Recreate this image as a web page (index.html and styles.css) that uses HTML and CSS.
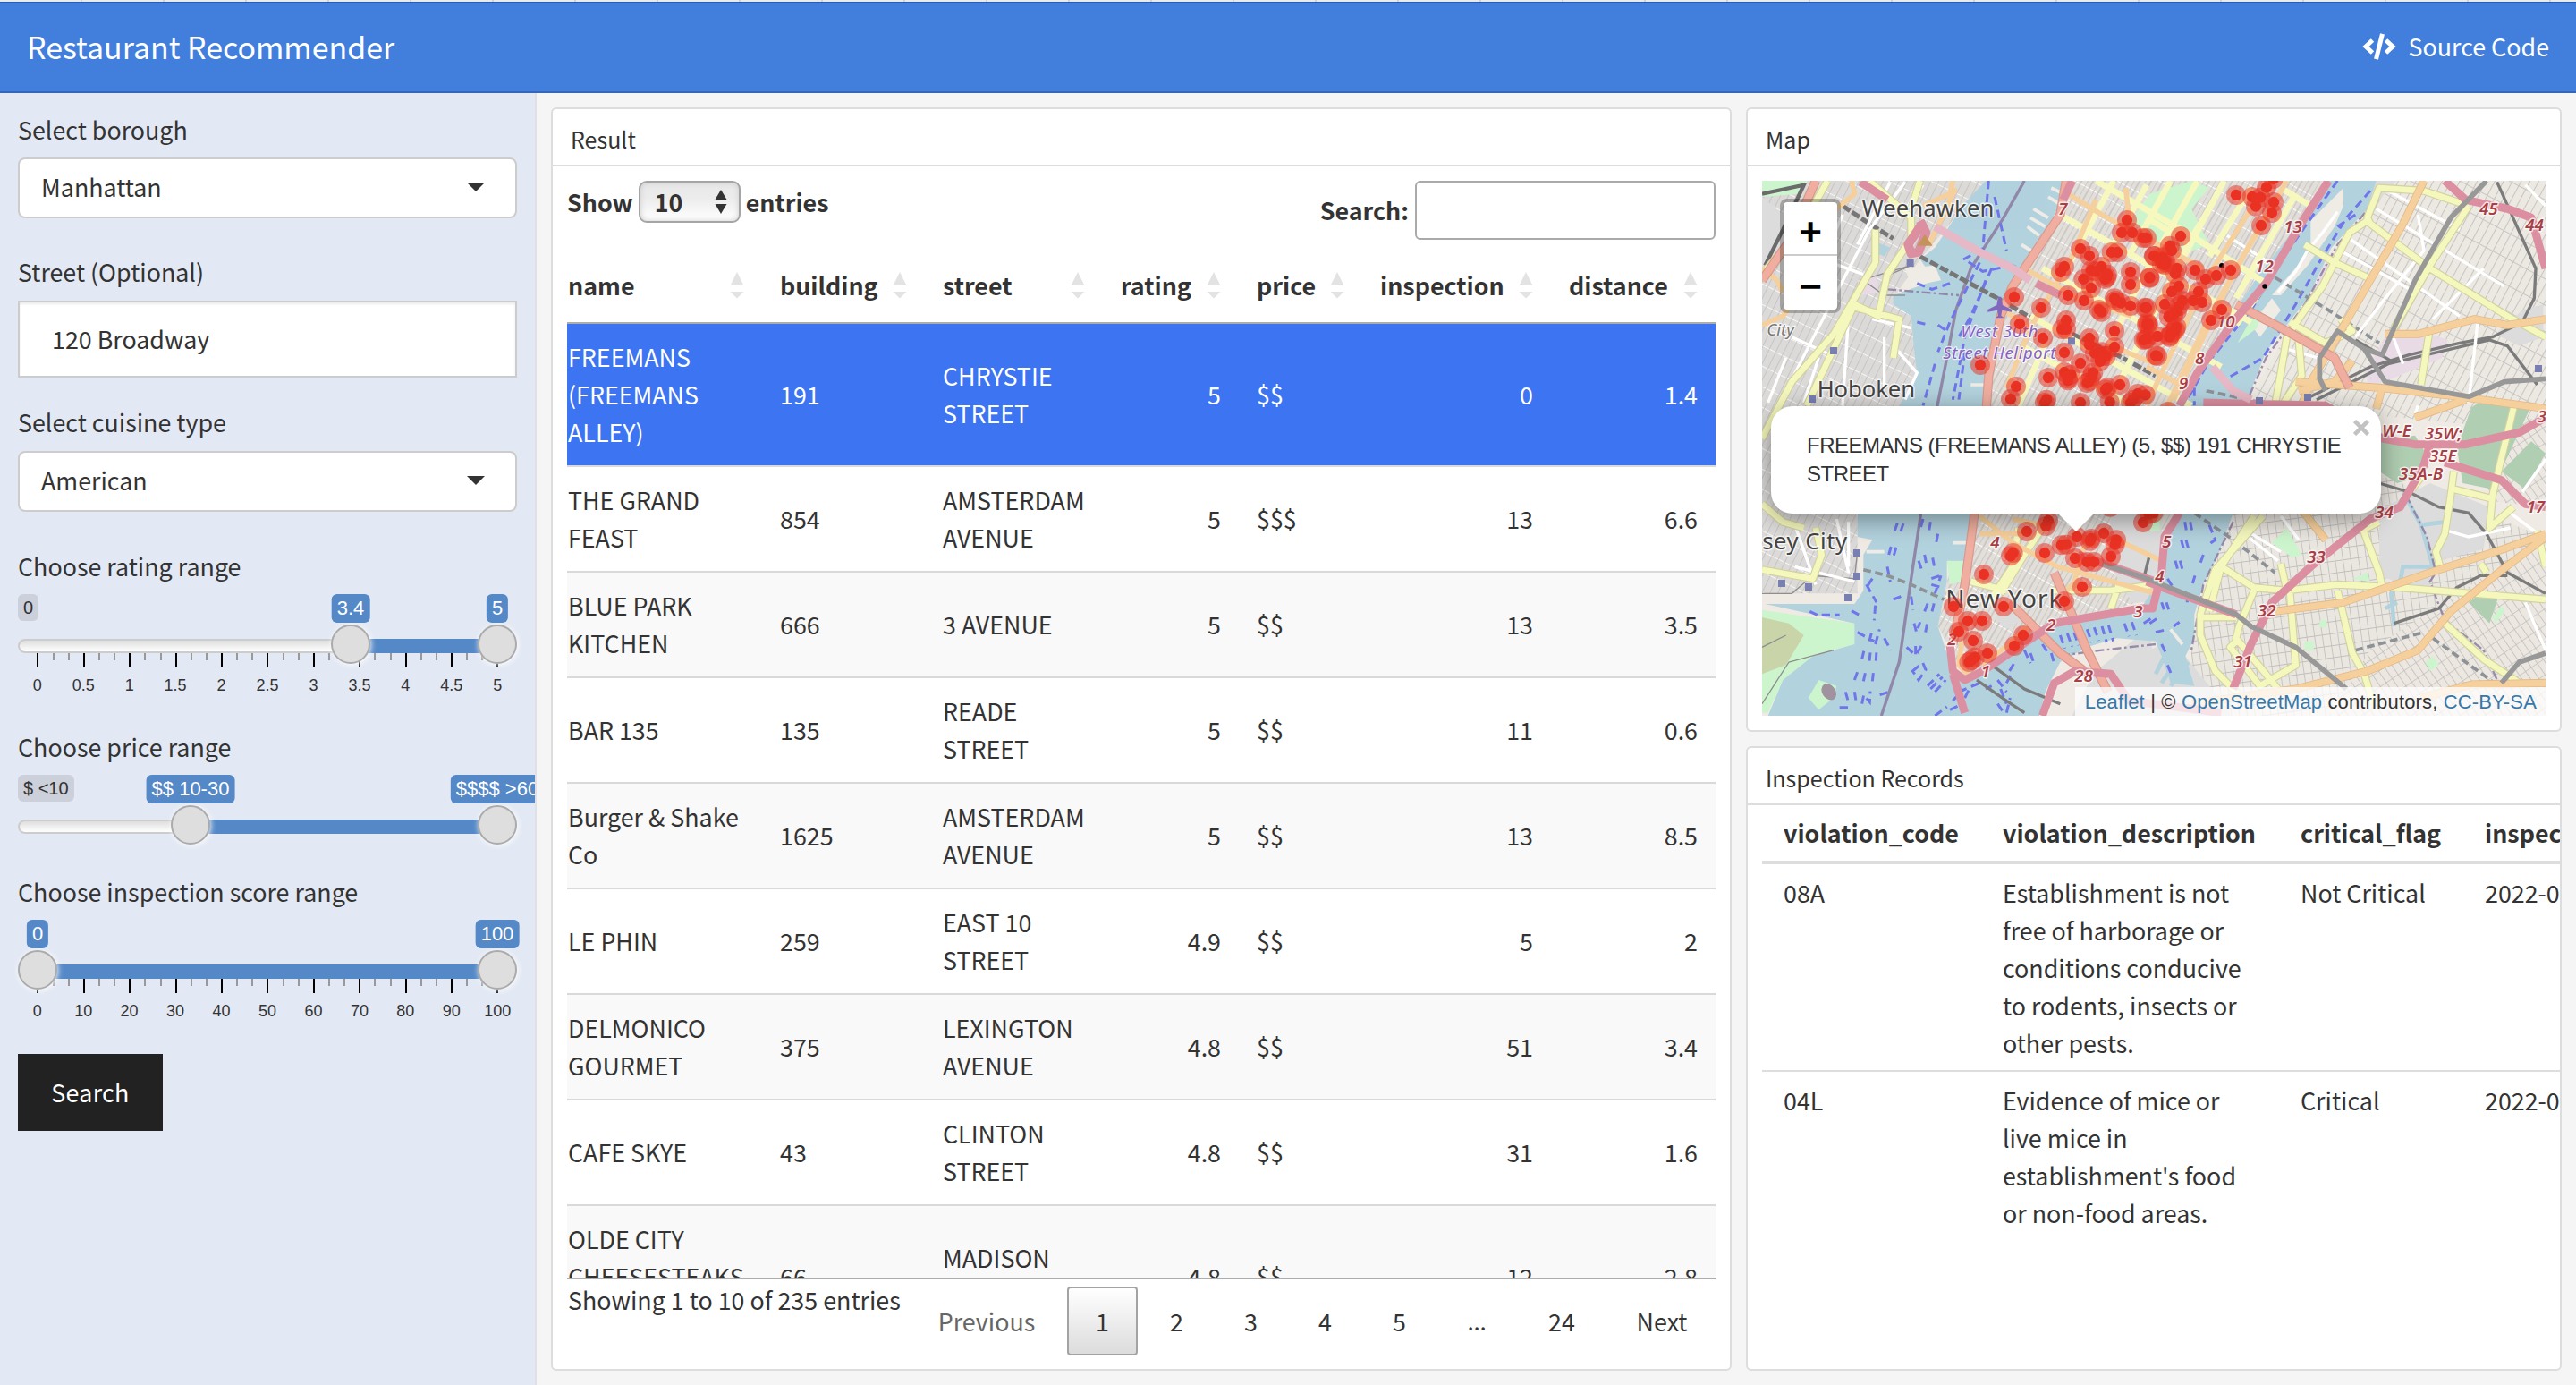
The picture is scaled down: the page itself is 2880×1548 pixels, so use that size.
FILE: index.html
```html
<!DOCTYPE html>
<html lang="en">
<head>
<meta charset="utf-8">
<title>Restaurant Recommender</title>
<link rel="stylesheet" href="styles.css">
</head>
<body>
<div class="tabstrip"></div>
<header class="topbar">
  <h1 class="brand">Restaurant Recommender</h1>
  <a class="source">
    <svg class="code-icon" viewBox="0 0 38 30"><g fill="none" stroke="#fff" stroke-width="5"><path d="M11.500 8 4 15l7.500 7M26.500 8 34 15l-7.500 7"/><path d="M22.500.8 15.500 29.200"/></g></svg>
    <span>Source Code</span>
  </a>
</header>
<div class="layout">
  <aside class="sidebar">
    <div class="field">
      <label>Select borough</label>
      <div class="select"><span>Manhattan</span><i class="caret"></i></div>
    </div>
    <div class="field field-street">
      <label>Street (Optional)</label>
      <div class="textbox">120 Broadway</div>
    </div>
    <div class="field field-cuisine">
      <label>Select cuisine type</label>
      <div class="select"><span>American</span><i class="caret"></i></div>
    </div>
    <div class="field field-rating">
      <label>Choose rating range</label>
      <div class="slider slider-grid">
        <span class="min">0</span>
        <div class="track"></div>
        <div class="bar" style="left:372px;width:164px"></div>
        <svg class="ticks" viewBox="0 0 558 16"><path class="minor" d="M40 0v8M57 0v8M91 0v8M108 0v8M142 0v8M160 0v8M194 0v8M211 0v8M245 0v8M262 0v8M297 0v8M314 0v8M348 0v8M365 0v8M399 0v8M417 0v8M451 0v8M468 0v8M502 0v8M519 0v8"/><path class="major" d="M22 0v16M74 0v16M125 0v16M177 0v16M228 0v16M279 0v16M331 0v16M382 0v16M434 0v16M485 0v16M536 0v16"/></svg>
        <div class="scale"><span>0</span><span>0.5</span><span>1</span><span>1.5</span><span>2</span><span>2.5</span><span>3</span><span>3.5</span><span>4</span><span>4.5</span><span>5</span></div>
        <b class="handle" style="left:350px"></b><b class="handle" style="left:514px"></b>
        <span class="val" style="left:372px">3.4</span><span class="val" style="left:536px">5</span>
      </div>
    </div>
    <div class="field field-price">
      <label>Choose price range</label>
      <div class="slider">
        <span class="min">$ &lt;10</span>
        <div class="track"></div>
        <div class="bar" style="left:193px;width:343px"></div>
        <b class="handle" style="left:171px"></b><b class="handle" style="left:514px"></b>
        <span class="val" style="left:193px">$$ 10-30</span><span class="val" style="left:536px">$$$$ &gt;60</span>
      </div>
    </div>
    <div class="field field-score">
      <label>Choose inspection score range</label>
      <div class="slider slider-grid">
        <div class="track"></div>
        <div class="bar" style="left:22px;width:514px"></div>
        <svg class="ticks" viewBox="0 0 558 16"><path class="minor" d="M40 0v8M57 0v8M91 0v8M108 0v8M142 0v8M160 0v8M194 0v8M211 0v8M245 0v8M262 0v8M297 0v8M314 0v8M348 0v8M365 0v8M399 0v8M417 0v8M451 0v8M468 0v8M502 0v8M519 0v8"/><path class="major" d="M22 0v16M74 0v16M125 0v16M177 0v16M228 0v16M279 0v16M331 0v16M382 0v16M434 0v16M485 0v16M536 0v16"/></svg>
        <div class="scale"><span>0</span><span>10</span><span>20</span><span>30</span><span>40</span><span>50</span><span>60</span><span>70</span><span>80</span><span>90</span><span>100</span></div>
        <b class="handle" style="left:0px"></b><b class="handle" style="left:514px"></b>
        <span class="val" style="left:22px">0</span><span class="val" style="left:536px">100</span>
      </div>
    </div>
    <button class="go">Search</button>
  </aside>

  <main class="board">
    <section class="card result">
      <h2>Result</h2>
      <div class="result-body">
        <div class="tools">
          <div class="length">Show <span class="count">10<svg viewBox="0 0 14 28"><path d="M7 0l6.500 11H.5zM.5 16h13L7 27z" fill="#333"/></svg></span> entries</div>
          <div class="filter">Search: <span class="filter-box"></span></div>
        </div>
        <div class="scroller">
          <table class="grid">
            <colgroup><col class="c1"><col class="c2"><col class="c3"><col class="c4"><col class="c5"><col class="c6"><col class="c7"></colgroup>
            <thead><tr><th>name</th><th>building</th><th>street</th><th>rating</th><th>price</th><th>inspection</th><th>distance</th></tr></thead>
            <tbody>
              <tr class="picked"><td>FREEMANS<br>(FREEMANS<br>ALLEY)</td><td>191</td><td>CHRYSTIE<br>STREET</td><td class="n">5</td><td>$$</td><td class="n">0</td><td class="n">1.4</td></tr>
              <tr><td>THE GRAND<br>FEAST</td><td>854</td><td>AMSTERDAM<br>AVENUE</td><td class="n">5</td><td>$$$</td><td class="n">13</td><td class="n">6.6</td></tr>
              <tr><td>BLUE PARK<br>KITCHEN</td><td>666</td><td>3 AVENUE</td><td class="n">5</td><td>$$</td><td class="n">13</td><td class="n">3.5</td></tr>
              <tr><td>BAR 135</td><td>135</td><td>READE<br>STREET</td><td class="n">5</td><td>$$</td><td class="n">11</td><td class="n">0.6</td></tr>
              <tr><td>Burger &amp; Shake<br>Co</td><td>1625</td><td>AMSTERDAM<br>AVENUE</td><td class="n">5</td><td>$$</td><td class="n">13</td><td class="n">8.5</td></tr>
              <tr><td>LE PHIN</td><td>259</td><td>EAST 10<br>STREET</td><td class="n">4.9</td><td>$$</td><td class="n">5</td><td class="n">2</td></tr>
              <tr><td>DELMONICO<br>GOURMET</td><td>375</td><td>LEXINGTON<br>AVENUE</td><td class="n">4.8</td><td>$$</td><td class="n">51</td><td class="n">3.4</td></tr>
              <tr><td>CAFE SKYE</td><td>43</td><td>CLINTON<br>STREET</td><td class="n">4.8</td><td>$$</td><td class="n">31</td><td class="n">1.6</td></tr>
              <tr><td>OLDE CITY<br>CHEESESTEAKS<br>&nbsp;</td><td>66</td><td>MADISON<br>&nbsp;</td><td class="n">4.8</td><td>$$</td><td class="n">12</td><td class="n">2.8</td></tr>
            </tbody>
          </table>
        </div>
        <div class="foot">
          <div class="info">Showing 1 to 10 of 235 entries</div>
          <nav class="pager"><a class="prev">Previous</a><a class="on">1</a><a>2</a><a>3</a><a>4</a><a>5</a><span>…</span><a class="last">24</a><a class="next">Next</a></nav>
        </div>
      </div>
    </section>

    <div class="side">
      <section class="card mapcard">
        <h2>Map</h2>
        <div class="map">
          <svg class="tiles" viewBox="60 306 2628 1794" preserveAspectRatio="none">
            <defs>
              <pattern id="blkM" width="34" height="68" patternUnits="userSpaceOnUse" patternTransform="rotate(29)"><rect width="34" height="68" fill="#e2deda"/><path d="M0 0H34" stroke="#fff" stroke-width="6"/><path d="M0 0V68M17 0V68" stroke="#c3c1bd" stroke-width="4"/></pattern>
              <pattern id="blkQ" width="26" height="78" patternUnits="userSpaceOnUse" patternTransform="rotate(28)"><rect width="26" height="78" fill="#ece8e2"/><path d="M0 0H26" stroke="#c2c0bd" stroke-width="5"/><path d="M0 0V78" stroke="#c6c4c1" stroke-width="6"/></pattern>
              <pattern id="blkB" width="26" height="40" patternUnits="userSpaceOnUse" patternTransform="rotate(-8)"><rect width="26" height="40" fill="#eae6e0"/><path d="M0 0H26M0 0V40" stroke="#c1bfbc" stroke-width="5"/></pattern>
              <pattern id="blkS" width="24" height="46" patternUnits="userSpaceOnUse" patternTransform="rotate(-34)"><rect width="24" height="46" fill="#ece8e1"/><path d="M0 0H24M0 0V46" stroke="#c1bfbc" stroke-width="5"/></pattern>
              <pattern id="blkJ" width="24" height="62" patternUnits="userSpaceOnUse" patternTransform="rotate(26)"><rect width="24" height="62" fill="#dcdad8"/><path d="M0 0H24" stroke="#f8f7f6" stroke-width="6"/><path d="M0 0V62" stroke="#bdbbb9" stroke-width="4"/></pattern>
              <marker id="dot" markerUnits="userSpaceOnUse" markerWidth="68" markerHeight="68" refX="34" refY="34"><circle cx="34" cy="34" r="33" fill="#e93223" fill-opacity=".52"/><circle cx="34" cy="34" r="18.500" fill="#e93223"/></marker>
            </defs>
            <rect x="60" y="306" width="2628" height="1794" fill="#efebe4"/>
            <path fill="url(#blkJ)" d="M60 306H810L590 570 500 700 560 760 580 960 380 1430V1690H60z"/>
            <path fill="url(#blkM)" d="M1080 306H1960L1650 800 1480 1060 1460 1420 1390 1700 1000 1810 740 1970 650 1800 800 1060 880 680z"/>
            <path fill="url(#blkQ)" d="M2120 306H2688V1150L2200 1100 1680 1060 1890 700z"/>
            <path fill="url(#blkB)" d="M1640 1420 2150 1300 2688 1500V1700L2300 2100H1500V1860L1590 1560z"/>
            <path fill="url(#blkS)" d="M2100 1880 2688 1500V2100H1960zM2460 1050 2688 1120V1400L2500 1380z"/>
            <path fill="#dcdcdc" d="M60 360 130 420 150 560 60 620zM2130 1410 2300 1320 2500 1400 2480 1540 2300 1590 2300 1690 2130 1630zM2610 740 2680 720V830L2600 860 2520 820zM1080 1790H1180V1850H1080zM840 1770 900 1730 930 1780 880 1810zM1230 1410H1400V1720H1300L1230 1600zM1350 1880 1440 1850 1560 2000 1640 2100H1340zM1170 1960 1360 1800 1390 2100H1100zM2080 306H2190L2130 370z"/>

            <!-- parks -->
            <g fill="#cdf5cd">
              <path d="M60 306H210L180 350 60 360zM1360 350 1500 306 1560 330 1500 400 1560 520 1450 560 1340 470 1290 450z"/>
              <path d="M60 1745 370 1790V1860L230 1900 130 1980 80 2090H60z"/>
              <path d="M1770 1520 1820 1470 1870 1560 1840 1570zM2040 1640 2090 1620 2100 1650zM1880 1850h30v30h-30zM2285 1920 2310 1900 2330 1930 2300 1950zM1660 850 1710 760 1720 830zM1930 1780h24v24h-24zM2510 1770 2540 1730 2550 1750 2520 1790zM1360 1420h34v60h-34zM680 1580H760V1640L690 1660z"/>
            </g>
            <path fill="#c9d5a9" d="M60 1770 150 1790 200 1830 140 1930 60 1960z"/>
            <g fill="#b0ceb2"><path d="M2440 1065 2500 1030 2640 1060 2510 1340 2410 1320 2390 1200zM2130 1180 2250 1160 2280 1210 2260 1300 2190 1320 2130 1280zM2540 1280 2640 1180 2688 1220 2620 1340 2580 1310zM2430 1720 2470 1690 2530 1700 2500 1790z"/></g>
            <g fill="#e8dbe6"><path d="M2080 950 2150 830 2270 810 2360 840 2340 900 2100 1000zM1900 720 1940 580 1970 600 1940 680zM380 640 440 620 450 680 390 690z"/></g>

            <!-- water -->
            <g fill="#b2d2de">
              <path d="M810 306 740 380 700 440 640 530 590 570 640 640 500 690 500 720 560 760 570 870 580 960 520 1060 400 1300 380 1430 380 1500 430 1510 400 1560V1680L370 1725 70 1725 370 1790V1860L230 1900 130 1980 80 2100H990L1010 2020 1060 1920 1150 1870 1250 1840 1380 1850 1400 1900 1430 1990 1510 2000 1480 1900 1510 1840 1510 1760 1540 1660 1590 1560 1640 1420 1680 1060 1750 880 1890 700 1970 530 2090 400 2120 306H1960L1820 500 1720 630 1650 740 1540 900 1480 1060 1460 1420 1420 1500 1390 1650 1330 1740 1040 1790 960 1830 800 1950 740 1970 700 1950 650 1800 680 1650V1580H740L770 1420 800 1060 850 740 880 680 940 580 1000 500 1060 380 1080 306z"/>
              <path d="M440 510 490 530 470 560 430 540z"/>
            </g>
            <path fill="#cdf5cd" d="M215 2040 250 1980 310 2000 300 2040 250 2080z"/>
            <g fill="none" stroke="#b2d2de" stroke-width="14"><path d="M2210 1350 2270 1460 2350 1450M2270 1460 2310 1600 2210 1600 2200 1650 2170 1690 2180 1800M2150 1740 2190 1720"/><path d="M1380 1960 1420 1880M1400 1990 1460 1900M1430 2000 1490 1920"/></g>
            <g fill="#efece6"><path d="M1770 690 1900 540 1900 440 1980 360 2010 330 2010 390 1980 460 1890 590 1800 690zM1700 790 1770 700 1800 740 1730 830zM540 600 640 590 660 640 560 660z"/><path fill="#cdf5cd" d="M1655 850 1700 770 1740 740 1720 800z"/></g>
            <path fill="none" stroke="#efece6" stroke-width="11" d="M1030 330 1070 350M1020 360 1060 385M970 400 1020 430M960 430 1010 460M950 460 990 490M930 520 970 545M410 1550h60M700 1520h50M760 990h50M1430 1810 1470 1860"/>

            <!-- state border and ferry lines -->
            <g fill="none" stroke="#8b7ba0" stroke-width="10" opacity=".85"><path d="M940 306 870 430 760 600 710 740 680 900 640 1100 590 1440 560 1640 520 1920 460 2100"/><path stroke-dasharray="30 10 8 10" stroke-width="7" d="M2120 370 1990 520 1880 720 1750 900 1680 1060M1640 1450 1540 1660 1500 1880M1380 1860 1200 1880 1050 1900M2220 1360 2290 1500 2320 1620 2300 1650 2350 1780 2480 1880 2530 1990M480 670 720 690"/></g>
            <g fill="none" stroke="#7076ea" stroke-width="9" stroke-dasharray="28 17">
              <path d="M820 306 800 540M840 360 880 540M735 570 790 540 900 590 800 610 740 570M790 580 690 780 650 880M830 600 760 760 720 830M810 640 740 830 700 1040M740 880 720 1040M640 920 600 1060M580 650 630 670 690 650M580 780 620 790M650 790 680 810"/>
              <path d="M505 1480l12-36M525 1482l12-36M485 1560l10-34M502 1562l10-34M600 1440l-10 36M625 1450l-6 34M650 1490l-8 40M605 1560l6 30M632 1570l6 30M585 1580l14 40M628 1640l34-12M628 1660l36 10M640 1690l20-60M480 1600l10 50M410 1660l34 60M430 1640l-20 30M440 1730l-4 50M500 1710l26-10M560 1700l6 46M605 1750l16-40M630 1750l10-40M570 1790l8 30 12-34M608 1820l8-40M470 1840l22 40M545 1870l30 28 0-40M580 1890l18-30M395 1910l8-34M420 1916l4-36M442 1916l2-36M370 1980l12-32M400 1984l8-36M430 1984l4-36M565 1950l34-28 10 24-24 34zM615 2000l40-40M625 2010l40-40M640 2020l36-40M340 2020l10 36M370 2020l6 36M395 2060l6-30 20 24 2-36M455 2030l30-10M320 2072h34M380 1820l56 30M420 1850l10-40M440 1860l14-50M220 1750l30 14M260 1762h60M360 1748l26 14M700 2050l34-40M740 2040l20-40M690 2080l50-24M640 2100l40-30M720 2020l70-30M810 2010l20-10M850 1980l30 40M860 2010l20 50M890 1950l14-24M880 1990l20-40M850 2060l20 30M880 2090l12-50M940 1880l20 44M960 1890l12 34M1000 1860l20 30M1030 1890l10 34M1060 1830l16 44M1084 1824l16 44M1106 1820l16 44M1150 1810l16 44M1174 1804l16 44M1200 1800l16 54M1222 1796l16 54M1275 1790l16 44M1300 1786l16 44M1340 1790l30-20"/>
              <path d="M1990 306 1810 560 1700 740 1560 910 1480 1050M2100 340 2020 430 1940 560 1850 720 1740 900 1600 980M2050 420 1990 460M1490 1000v60M1510 1000v60"/>
              <path d="M1478 1450l6 34M1496 1450l6 30M1466 1510l8 30M1482 1510l8 30M1446 1580l8 30M1462 1580l8 30M1420 1640l16 26M1400 1720l8 24M1416 1720l8 24M1560 1460l20 50-20 14M1540 1560l-12 34M1512 1630l-8 26M1486 1700v20M1360 1790l24-16M1380 1820l40-10M1440 1800l20-14M1400 1860l20 40M1420 1930l14 34"/>
            </g>

            <!-- railways -->
            <g fill="none" stroke="#8b8b8b" stroke-width="13"><path stroke="#6b6b6b" d="M60 350 200 320 130 470 70 590"/><path stroke="#777" stroke-width="15" stroke-dasharray="30 8" d="M590 560 720 630 850 700 970 770M1100 820 1250 890 1380 960M330 390 420 450 500 500"/><path stroke="#8d9297" stroke-width="11" stroke-dasharray="26 14" d="M400 1610 480 1630 560 1660 670 1710M1780 630 1960 740 2130 850M1510 1420 1640 1510 1780 1620M1550 1010 1780 1060M2050 1880 2280 1820M2310 1840 2530 2000"/>
              <path stroke="#7b7b7b" stroke-width="10" d="M1900 1030 2100 930 2230 890 2400 850 2510 830 2610 780 2650 700 2655 600 2525 310M1920 1040 2160 920 2500 840 2560 860 2660 990M2130 1320 2230 1350 2330 1400 2430 1420 2490 1490 2560 1620 2688 1690M2180 1790 2330 1740 2390 1670 2470 1630 2560 1630M2050 840 2170 910M830 1930 940 2010 1060 2060M780 1980 880 2050 940 2090M1340 1640 1360 1560"/></g>
            <g fill="none" stroke="#8e8e8e" stroke-width="4"><path d="M60 1690 160 1690 230 1630 370 1640 380 1550M300 1880 150 1920 60 2060M490 620 560 590 390 640 340 790 270 930 230 1040M140 1830 60 1870M540 690 470 690 400 640"/></g>

            <!-- minor white streets -->
            <g fill="none" stroke="#fff" stroke-width="10"><path d="M540 310 420 470 300 700 130 1030M490 310 380 520M330 420 270 560M600 320 520 430M180 540 400 620M160 830 290 890M250 900 200 1050M430 770 560 800M470 830V1000M350 760 330 1060M170 1460 240 1660M310 1440 350 1620M350 1450V1600M170 1600 370 1650M500 860 580 950 540 1040M140 900 80 1050"/><path d="M2260 420 2280 540 2150 700 2050 830M2120 400 2550 660M2030 500 2400 760M2000 540 2250 680M2160 340 2400 470M2480 600 2310 770M2460 780 2430 1050M2620 320 2688 390M2170 810 2210 920M1620 490 1760 580M1820 870 1960 910M2688 1240 2610 1350M2570 1420 2650 1480 2688 1540M2620 1720 2688 1880M2360 1480 2430 1500 2570 1470M2250 1090 2260 1060M1690 1500 1790 1580M1670 1470 1800 1550M1800 1430 1860 1510"/></g>
            <path fill="none" stroke="#fff" stroke-width="10" d="M1990 410 1940 480 1890 540 1850 610 1790 680"/>

            <!-- yellow roads -->
            <g fill="none" stroke="#d3d2a0" stroke-width="27" stroke-linejoin="round"><path id="y1" d="M280 306 180 480 60 620M420 306 560 430 560 500 480 620 450 760 370 720 210 1060M590 306 560 400M440 470 440 580 300 820 160 980 60 1170M370 730 520 770 500 900M240 1470 260 1560 230 1640 60 1610M60 1390 130 1450 200 1470M2688 830 2560 760 2300 600 2100 450 2090 430 2130 330 2280 340 2430 390M2430 390 2300 590 2180 800M1880 520 1980 580 2090 630M2090 440 2030 480 1980 580 1940 660 1880 740 1820 830 1800 950 1780 1060M1860 840 1870 960 1810 1050M1830 780 1950 850 2040 810 2000 770M2300 800 2270 990M2585 1050 2510 1360 2500 1470 2580 1400M2380 1280 2370 1360 2350 1490 2320 1550 2340 1620M2380 1340 2500 1370M2270 1300 2240 1340M2070 1460 2130 1620 2140 1670M2130 1450 2070 1480M1740 1430 1580 1610 1530 1760 1530 1830 1580 1950 1660 2030M1710 1430 1600 1600 1560 1750M1600 1600 1710 1670 1820 1680 1990 1660 2200 1670 2688 1710M1710 1680 1660 1800 1650 1840 1750 1960 1790 2010M1660 1840 1630 1870 1730 2000 1850 1930 1830 1680M1540 1770 1650 1770M1990 1680 2040 1890 2080 1960 2110 2060M1800 1590 1820 1680M2350 1790 2480 1910 2600 1990M2470 1590 2490 1620M1000 1470 940 1560 860 1690M920 1470 900 1600 820 1720M1260 1650 1230 1740M1030 1680 1230 1680 1380 1660M760 1650 880 1680M2660 1480 2688 1600"/></g>
            <path fill="none" stroke="#f5f8bd" stroke-width="20" stroke-linejoin="round" d="M280 306 180 480 60 620M420 306 560 430 560 500 480 620 450 760 370 720 210 1060M590 306 560 400M440 470 440 580 300 820 160 980 60 1170M370 730 520 770 500 900M240 1470 260 1560 230 1640 60 1610M60 1390 130 1450 200 1470M2688 830 2560 760 2300 600 2100 450 2090 430 2130 330 2280 340 2430 390M2430 390 2300 590 2180 800M1880 520 1980 580 2090 630M2090 440 2030 480 1980 580 1940 660 1880 740 1820 830 1800 950 1780 1060M1860 840 1870 960 1810 1050M1830 780 1950 850 2040 810 2000 770M2300 800 2270 990M2585 1050 2510 1360 2500 1470 2580 1400M2380 1280 2370 1360 2350 1490 2320 1550 2340 1620M2380 1340 2500 1370M2270 1300 2240 1340M2070 1460 2130 1620 2140 1670M2130 1450 2070 1480M1740 1430 1580 1610 1530 1760 1530 1830 1580 1950 1660 2030M1710 1430 1600 1600 1560 1750M1600 1600 1710 1670 1820 1680 1990 1660 2200 1670 2688 1710M1710 1680 1660 1800 1650 1840 1750 1960 1790 2010M1660 1840 1630 1870 1730 2000 1850 1930 1830 1680M1540 1770 1650 1770M1990 1680 2040 1890 2080 1960 2110 2060M1800 1590 1820 1680M2350 1790 2480 1910 2600 1990M2470 1590 2490 1620M1000 1470 940 1560 860 1690M920 1470 900 1600 820 1720M1260 1650 1230 1740M1030 1680 1230 1680 1380 1660M760 1650 880 1680M2660 1480 2688 1600"/>
            <path fill="none" stroke="#f6f8be" stroke-width="21" d="M1180 306 1500 490 1750 650M1060 420 1700 780M1000 600 1600 930M960 760 1500 1060M930 860 1300 1060M1520 306 1310 680 1160 990M1610 306 1400 700 1220 1060M1700 330 1560 560M1350 320 1140 700M1240 306 1060 640M1560 400 1440 600M1800 330 1900 390M1850 350 1650 700M1430 306 1290 560M1350 430 1500 520M1010 850 920 1060M1750 650 1650 790"/>
            <!-- orange roads -->
            <g fill="none" stroke="#f6d09c" stroke-width="22" stroke-linejoin="round"><path stroke="#e3b988" stroke-width="27" d="M2280 306 2210 450 1960 880 1900 980 1870 1060M2040 910 1980 980 1860 1010M1850 980 2130 1000 2400 1030 2688 1070M2150 820 2260 820 2450 770 2560 790 2688 770M2140 1000 2120 1070M2250 1100 2420 1040M1870 1410 1950 1510M1780 1750 2010 1720 2300 1620 2550 1540 2688 1490M2688 1500 2530 1620 2370 1750 2260 1880 2090 1950 1850 2010 1500 2060M2270 2040 2440 1995 2688 1990"/><path d="M2280 306 2210 450 1960 880 1900 980 1870 1060M2040 910 1980 980 1860 1010M1850 980 2130 1000 2400 1030 2688 1070M2150 820 2260 820 2450 770 2560 790 2688 770M2140 1000 2120 1070M2250 1100 2420 1040M1870 1410 1950 1510M1780 1750 2010 1720 2300 1620 2550 1540 2688 1490M2688 1500 2530 1620 2370 1750 2260 1880 2090 1950 1850 2010 1500 2060M2270 2040 2440 1995 2688 1990"/><path stroke-width="17" d="M1070 340 1200 420 1540 600M1280 330 1290 430M1180 370 1100 560 960 800 880 1000M1700 400 1560 620 1400 950 1350 1060M1750 420 1640 620 1440 1040M1820 306 1560 760 1420 1060M940 600 1120 700 1300 760M1230 860 1380 920M1350 930 1500 1010M870 740 960 800M790 1430 900 1520 1050 1600 1380 1690M790 1490 960 1490M1120 1640 1060 1700M1250 1510 1400 1580M1140 1530 1100 1680M900 1440 1000 1460M700 306 690 350 600 390M710 330 620 520M360 306 370 350 310 400M60 790 130 760 170 700M60 600 110 640 130 680M800 1930 900 1850 960 1790M730 1850 720 1930 760 1970"/></g>
            <!-- trunk roads -->
            <g fill="none" stroke-linejoin="round"><path stroke="#d8988c" stroke-width="31" d="M240 306 150 510 60 640M1080 306 1060 420 900 660 860 760 820 960 810 1100 770 1440 740 1660 700 1860M1650 720 1820 810 1980 900 2010 960 2030 1000M890 1720 1060 1890 1140 1950M1040 1620 1150 1880 1220 2020"/><path stroke="#efae9f" stroke-width="24" d="M240 306 150 510 60 640M1080 306 1060 420 900 660 860 760 820 960 810 1100 770 1440 740 1660 700 1860M1650 720 1820 810 1980 900 2010 960 2030 1000M890 1720 1060 1890 1140 1950M1040 1620 1150 1880 1220 2020"/></g>
            <!-- motorways -->
            <g fill="none" stroke="#dc8fa0" stroke-width="27" stroke-linejoin="round"><path d="M1960 306 1880 430 1750 650 1640 780 1520 950 1460 1060M1460 1420 1410 1500 1400 1620 1370 1740 1330 1740 1040 1790 800 1950 740 1980 700 1950 690 1860M700 1960 740 2090M1100 306 1070 370M390 310 480 370M2350 306 2420 370 2560 400 2640 430 2688 600M1540 1050 1950 1060 2140 1170 2250 1190 2420 1190 2600 1150 2688 1100M2300 1190 2280 1260 2200 1400 2100 1440 1900 1600 1770 1720 1700 1860 1640 2010M2350 1250 2540 1310 2620 1390 2688 1400M1000 2100 1040 1990 1110 1950 1230 1960 1290 2050 1600 2090M1350 1650 1650 1760M1120 1560 1380 1650"/><path stroke-width="30" d="M590 440 610 480 585 545 560 550 550 520 590 460"/><path stroke="#e7b8c5" d="M640 460 780 540 900 600 960 640M1570 930 1640 1010 1700 1040"/><path d="M980 650 1060 690"/></g>
            <g fill="none" stroke="#989898" stroke-width="17" stroke-linejoin="round"><path d="M2490 306 2370 430 2250 640 2140 890 2080 870 1990 810 1930 900 1930 970 1950 1010M2080 870 2150 980 2430 1030 2550 980 2688 970M1350 1640 1650 1760 1700 1800 1850 1870 2020 2010M1200 1590 1350 1640M2540 1990 2600 1920 2688 1890"/></g>
            <g fill="#7a7fb2"><path d="M545 570h24v24h-24zM288 864h24v24h-24zM216 1026h24v24h-24zM1086 832h24v24h-24zM366 1542h24v24h-24zM366 1620h24v24h-24zM336 1692h24v24h-24zM204 1656h24v24h-24zM114 1644h24v24h-24zM1716 1032h24v24h-24zM1878 1020h24v24h-24zM2652 924h24v24h-24z"/></g>
            <path fill="#c4935c" d="M606 486 632 524H580z"/><circle cx="1602" cy="591" r="9"/><circle cx="1746" cy="660" r="8"/>
            <path fill="#8268bb" d="M852 695h10l5 28 30 15v8l-32-6-3 18 10 8h-30l10-8-3-18-32 6v-8l30-15z"/>
            <ellipse cx="284" cy="2020" rx="22" ry="30" fill="#a0929f" transform="rotate(-35 284 2020)"/>

            <g class="places"><text x="395" y="425" textLength="443">Weehawken</text><text x="245" y="1032" textLength="328">Hoboken</text><text x="61" y="1541" textLength="284">sey City</text><text class="major-city" x="676" y="1738" textLength="390">New York</text></g>
            <text class="city" x="76" y="825" textLength="92">City</text>
            <g class="heli"><text x="727" y="831" textLength="258">West 30th</text><text x="667" y="904" textLength="378">Street Heliport</text></g>
            <g class="exits"><text x="1054" y="420">7</text><text x="1810" y="480">13</text><text x="1714" y="612">12</text><text x="1584" y="797">10</text><text x="1512" y="922">8</text><text x="1458" y="1006">9</text><text x="2466" y="420">45</text><text x="2620" y="475">44</text><text x="826" y="1540">4</text><text x="1014" y="1814">2</text><text x="1306" y="1770">3</text><text x="682" y="1862">2</text><text x="794" y="1972">1</text><text x="1108" y="1986">28</text><text x="1402" y="1536">5</text><text x="1378" y="1654">4</text><text x="1888" y="1586">33</text><text x="1722" y="1768">32</text><text x="1642" y="1938">31</text><text x="2116" y="1438">34</text><text x="2140" y="1164">W-E</text><text x="2282" y="1174">35W;</text><text x="2298" y="1247">35E</text><text x="2196" y="1307">35A-B</text><text x="2624" y="1418">17</text><text x="2660" y="1115">3</text></g>

            <g class="dots">
              <polyline points="1284,438 1266,480 1302,480 1338,498 1128,534 1158,558 1232,546 1252,546 1375,558 1074,594 1062,612 1296,612 1296,654 1360,630 1164,606 1198,594 1176,610 1138,636 1164,666 1216,630 1210,636 1218,620 906,696 1086,690 1140,708 996,732 924,786 1002,834 1242,700 1246,708 1264,716 1296,726 1344,732 1190,738 1198,746 1080,774 1066,804 1080,804 1242,810 1350,790 1346,838 1340,840 1158,834 1158,856 1242,864 1074,882 1176,884 1200,880 1204,892 1214,894 1194,912 1128,918 792,924 1074,948 1096,956 1086,976 1086,970 1020,966 1158,978 1150,984 1164,964 1170,950 1212,1006 1218,1000 1260,990 912,996 894,1038 1008,1050 1014,1040 1128,1050 1226,1048 1320,1020 1296,1050 1304,1040 1352,782 1380,892"/>
              <polyline points="1650,354 1752,328 1704,360 1732,362 1716,392 1776,378 1770,414 1734,456 1464,492 1428,524 1434,540 1350,498 1374,558 1402,562 1400,584 1410,588 1414,580 1452,600 1446,618 1512,606 1632,606 1584,624 1548,636 1360,632 1458,660 1434,678 1524,678 1506,708 1536,714 1410,720 1470,708 1458,726 1452,744 1440,756 1424,762 1602,738 1566,774 1350,732 1356,788 1450,796 1446,806 1434,816 1426,830 1428,826 1386,828 1350,836 1386,894 1346,1024 1422,1080 1775,300"/>
              <polyline points="948,1482 1020,1446 1012,1464 1116,1500 1206,1488 1164,1506 1160,1514 1064,1528 1080,1526 1248,1510 1244,1526 1230,1566 1008,1554 902,1554 894,1564 1110,1572 1150,1584 1174,1584 804,1626 1134,1668 1074,1716 702,1734 870,1734 750,1782 798,1782 720,1818 768,1848 936,1830 906,1866 816,1890 774,1904 762,1914 754,1920 1338,1452 1358,1424 1372,1420 1228,1400"/>
            </g>
          </svg>
          <div class="zoomer"><span class="plus">+</span><span>−</span></div>
          <div class="popup">FREEMANS (FREEMANS ALLEY) (5, $$) 191 CHRYSTIE<br>STREET<svg class="x" viewBox="0 0 18 18"><path d="M1.500 1.500l15 15M16.500 1.500l-15 15" stroke="#c2c2c2" stroke-width="4.500"/></svg><svg class="tip" viewBox="0 0 42 21"><path d="M0 0H42L21 21z" fill="#fff"/></svg></div>
          <div class="credit"><a>Leaflet</a> | © <a>OpenStreetMap</a> contributors, <a>CC-BY-SA</a></div>
        </div>
      </section>
      <section class="card records">
        <h2>Inspection Records</h2>
        <table class="recs">
          <colgroup><col class="r1"><col class="r2"><col class="r3"><col class="r4"></colgroup>
          <thead><tr><th>violation_code</th><th>violation_description</th><th>critical_flag</th><th>inspection_date</th></tr></thead>
          <tbody>
            <tr><td>08A</td><td>Establishment is not<br>free of harborage or<br>conditions conducive<br>to rodents, insects or<br>other pests.</td><td>Not Critical</td><td>2022-05-11</td></tr>
            <tr><td>04L</td><td>Evidence of mice or<br>live mice in<br>establishment's food<br>or non-food areas.</td><td>Critical</td><td>2022-05-11</td></tr>
          </tbody>
        </table>
      </section>
    </div>
  </main>
</div>
</body>
</html>
```
FILE: styles.css
```css
* { box-sizing: border-box; }
body {
  margin: 0; width: 2880px; height: 1548px; overflow: hidden;
  display: flex; flex-direction: column;
  background: #f5f5f5; color: #333;
  font: 26.84px/42px "Noto Sans CJK SC", "Noto Sans", sans-serif;
}
h1, h2 { margin: 0; font-weight: 400; }

.tabstrip { height: 2px; background: repeating-linear-gradient(90deg, #e9ebea 0 90px, #cfd3d6 90px 92px); }
.topbar {
  height: 102px; padding: 0 30px 2px; display: flex; align-items: center; justify-content: space-between;
  background: #427fdd; border-top: 1px solid #1f5fc4; border-bottom: 2px solid #3467ba; color: #fff;
}
.brand { font-size: 33.9px; }
.source { display: flex; align-items: center; gap: 14px; font-size: 26.84px; }
.code-icon { width: 38px; height: 30px; }

.layout { flex: 1; display: flex; min-height: 0; }

/* filters */
.sidebar { width: 600px; padding: 21px 20px 0; background: #e3e9f4; border-right: 2px solid #dfe1e6; overflow: hidden; }
.field { display: flex; flex-direction: column; gap: 9px; }
.field label { height: 42px; line-height: 40px; }
.field-street { margin-top: 40px; }
.field-street, .field-cuisine { gap: 10px; }
.field-cuisine { margin-top: 30px; }
.field-rating { margin-top: 41px; }
.field-price { margin-top: 31px; }
.field-score { margin-top: 31px; }
.select {
  height: 68px; padding: 0 34px 2px 24px; display: flex; align-items: center; justify-content: space-between;
  background: #fff; border: 2px solid #ccc; border-radius: 8px;
}
.caret { border: 10px solid transparent; border-top-color: #333; border-bottom: 0; }
.textbox { height: 86px; padding: 0 36px; line-height: 82px; background: #fff; border: 2px solid #ccc; box-shadow: inset 0 2px 3px rgba(0,0,0,.08); }

.slider { position: relative; height: 80px; font: 22px/32px "Liberation Sans", Arial, sans-serif; }
.slider.slider-grid { height: 120px; }
.min { position: absolute; left: 0; top: 0; height: 30px; padding: 0 6px; font-size: 20px; line-height: 30px; background: #cbd0da; border-radius: 6px; }
.track { position: absolute; left: 0; top: 50px; width: 558px; height: 16px; border: 2px solid #ccc; border-radius: 16px; background: linear-gradient(#dedede, #fff); }
.bar { position: absolute; top: 50px; height: 16px; background: #5488c7; }
.handle { position: absolute; top: 34px; width: 44px; height: 44px; border-radius: 50%; border: 2px solid #ababab; background: #dedede; box-shadow: 1px 1px 6px rgba(255,255,255,.9); }
.val { position: absolute; top: 0; transform: translateX(-50%); height: 32px; padding: 0 6px; white-space: nowrap; color: #fff; background: #5488c7; border-radius: 6px; }
.ticks { position: absolute; left: 0; top: 66px; width: 558px; height: 16px; }
.ticks .minor { stroke: #999; stroke-width: 2; }
.ticks .major { stroke: #000; stroke-width: 2; }
.scale { position: absolute; left: -4px; top: 92px; width: 566px; display: flex; font-size: 18px; line-height: 20px; }
.scale span { flex: 1; text-align: center; }
.go { display: block; width: 162px; height: 86px; margin: 30px 0 0; padding: 0; border: 0; background: #222; color: #fff; font: inherit; letter-spacing: .3px; }

/* cards */
.board { flex: 1; display: grid; grid-template-columns: 1320px 912px; gap: 16px; padding: 16px; height: 1444px; min-width: 0; }
.card { background: #fff; border: 2px solid #ddd; border-radius: 6px; overflow: hidden; }
.card h2 { height: 64px; padding-left: 20px; line-height: 67px; font-size: 25px; border-bottom: 2px solid #ddd; }
.result { height: 1412px; }
.result-body { padding: 16px; }
.tools { display: flex; justify-content: space-between; height: 78px; font-weight: 700; }
.length { height: 47px; display: flex; align-items: center; gap: 6px; }
.count { width: 114px; height: 47px; padding: 0 13px 0 16px; display: flex; align-items: center; justify-content: space-between; border: 2px solid #a5a5a5; border-radius: 9px; background: linear-gradient(#e8e8e8, #ececec 40%, #fff); box-shadow: inset 0 0 6px #ccc; }
.count svg { width: 14px; height: 28px; }
.filter { height: 66px; display: flex; align-items: center; gap: 7px; }
.filter-box { width: 336px; height: 66px; border: 2px solid #aaa; border-radius: 6px; }
.scroller { height: 1150px; overflow: hidden; border-bottom: 2px solid #adadad; }
.grid { width: 1284px; table-layout: fixed; border-collapse: separate; border-spacing: 0; }
.c1 { width: 218px; } .c2 { width: 182px; } .c3 { width: 199px; } .c4 { width: 152px; } .c5 { width: 138px; } .c6 { width: 211px; } .c7 { width: 184px; }
.grid th {
  height: 82px; padding: 0 0 2px 20px; text-align: left; border-bottom: 2px solid #adadad;
  background: url("data:image/svg+xml,%3Csvg xmlns='http://www.w3.org/2000/svg' width='16' height='30'%3E%3Cpath d='M8 0l7.500 15H.5zM.5 22h15L8 29.500z' fill='%23e3e3e3'/%3E%3C/svg%3E") right 20px top 24px no-repeat;
}
.grid td { padding: 16px 0 16px 20px; border-bottom: 2px solid #d9d9d9; }
.grid th:first-child, .grid td:first-child { padding-left: 1px; }
.grid td.n { padding-right: 20px; text-align: right; }
.grid tr:nth-child(odd) td { background: #f9f9f9; }
.grid .picked td { background: #3c74f2 !important; color: #fff; }
.foot { display: flex; justify-content: space-between; padding-top: 8px; }
.info { line-height: 30px; padding-left: 1px; }
.pager { display: flex; gap: 4px; text-align: center; line-height: 77px; }
.pager a { width: 79px; height: 77px; }
.pager .prev { width: 172px; color: #666; }
.pager .on { line-height: 73px; border: 2px solid #a3a3a3; border-radius: 4px; background: linear-gradient(#fff, #dcdcdc); }
.pager span { width: 86px; font-family: "Noto Sans", sans-serif; }
.pager .last { width: 96px; }
.pager .next { width: 120px; }

.side { display: grid; grid-template-rows: 698px 698px; gap: 16px; }
.map { position: relative; width: 876px; height: 598px; margin: 16px; overflow: hidden; }
.tiles { display: block; width: 876px; height: 598px; }
.tiles text { paint-order: stroke; stroke: rgba(255,255,255,.75); stroke-linejoin: round; font-family: "Noto Sans", sans-serif; }
.places text { font-size: 77px; fill: #444; stroke-width: 9px; }
.places .major-city { font-size: 84px; }
.tiles .city { font-size: 56px; font-style: italic; fill: #777; stroke-width: 8px; }
.heli text { font-size: 55px; font-style: italic; fill: #8461c4; stroke-width: 7px; }
.exits text { font-size: 56px; font-style: italic; font-weight: 600; fill: #a83f45; stroke-width: 9px; }
.dots polyline { fill: none; stroke: none; marker: url(#dot); }
.zoomer { position: absolute; left: 20px; top: 20px; width: 68px; height: 128px; border: 4px solid rgba(0,0,0,.25); border-radius: 8px; background: #fff; background-clip: padding-box; display: flex; flex-direction: column; }
.zoomer span { height: 60px; text-align: center; font: 700 44px/68px "Liberation Sans", sans-serif; color: #000; }
.zoomer .plus { border-bottom: 2px solid #ccc; }
.popup { position: absolute; left: 10px; top: 252px; width: 682px; height: 120px; padding: 28px 40px; border-radius: 24px; background: #fff; box-shadow: 0 6px 28px rgba(0,0,0,.4); font: 24px/32px "Liberation Sans", Arial, sans-serif; letter-spacing: -.49px; white-space: nowrap; }
.x { position: absolute; right: 13px; top: 15px; width: 18px; height: 18px; }
.tip { position: absolute; left: 320px; top: 119px; width: 42px; height: 21px; }
.credit { position: absolute; right: 0; bottom: 0; height: 32px; padding: 0 10px 0 11px; background: rgba(255,255,255,.75); font: 22px/33px "Liberation Sans", Arial, sans-serif; letter-spacing: .15px; white-space: nowrap; }
.credit a { color: #3878a8; }

.recs { width: 1120px; margin-left: 16px; table-layout: fixed; border-collapse: separate; border-spacing: 0; }
.r1 { width: 245px; } .r2 { width: 333px; } .r3 { width: 206px; } .r4 { width: 336px; }
.recs th { height: 66px; padding: 0 0 0 24px; text-align: left; border-bottom: 4px solid #ddd; }
.recs td { padding: 11px 0 9px 24px; vertical-align: top; border-bottom: 2px solid #ddd; }
.recs tr:last-child td { border-bottom: 0; }
```
